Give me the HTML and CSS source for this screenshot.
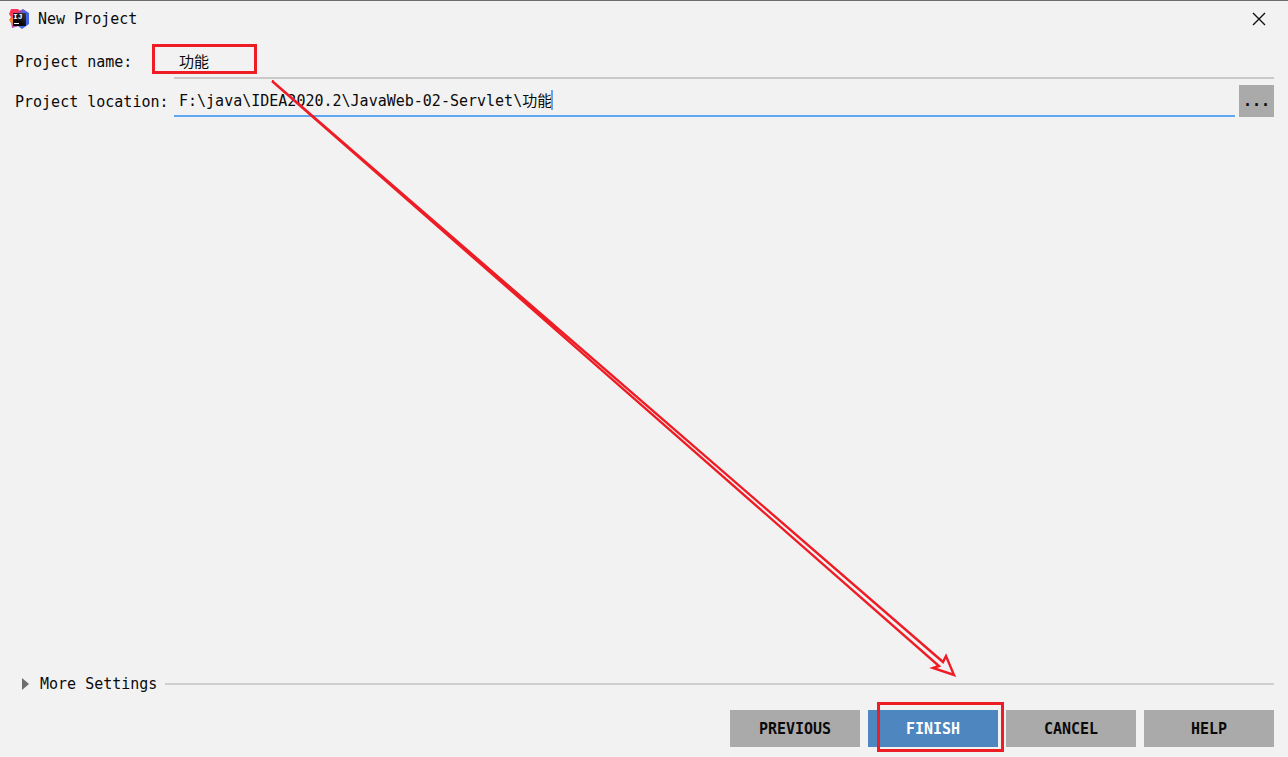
FILE: index.html
```html
<!DOCTYPE html>
<html lang="en">
<head>
  <meta charset="UTF-8">
  <title>New Project</title>
  <link rel="stylesheet" href="styles.css">
</head>
<body>
  <div class="dialog">
    <header class="title-bar">
      <svg class="logo" width="20" height="20" viewBox="0 0 20 20">
        <defs>
          <linearGradient id="warm" x1="0" y1="0" x2="0" y2="1">
            <stop offset="0" stop-color="#fe315d"/>
            <stop offset="0.35" stop-color="#fb3a50"/>
            <stop offset="0.6" stop-color="#f98b2b"/>
            <stop offset="1" stop-color="#b642d6"/>
          </linearGradient>
          <linearGradient id="cool" x1="0" y1="0" x2="1" y2="1">
            <stop offset="0" stop-color="#ee2a75"/>
            <stop offset="0.4" stop-color="#4768e8"/>
            <stop offset="1" stop-color="#3a62e0"/>
          </linearGradient>
          <linearGradient id="face" x1="0" y1="1" x2="1" y2="0">
            <stop offset="0.4" stop-color="#0b0608"/>
            <stop offset="1" stop-color="#3a3a3c"/>
          </linearGradient>
        </defs>
        <path d="M2 0 L9 0 L12 3 L10 17 L3 19 L2 14 L0 11 L2 8 L0 5 Z" fill="url(#warm)"/>
        <path d="M8 3 L14 0 L20 4 L20 15 L13 20 L9 17 Z" fill="url(#cool)"/>
        <rect x="4" y="4" width="13" height="13" fill="url(#face)"/>
        <text class="logo-text" x="4" y="10">IJ</text>
        <rect x="5" y="14" width="5" height="1" fill="#fff"/>
      </svg>
      <h1>New Project</h1>
      <button class="close" aria-label="Close">
        <svg width="14" height="14" viewBox="0 0 14 14">
          <path d="M1 1 L13 13 M13 1 L1 13" stroke="#111" stroke-width="1.4"/>
        </svg>
      </button>
    </header>

    <main class="form">
      <div class="row">
        <label for="project-name">Project name:</label>
        <div class="field">
          <input type="text" id="project-name" value="功能">
          <span class="mark name-mark"></span>
        </div>
      </div>
      <div class="row">
        <label for="project-location">Project location:</label>
        <div class="field active">
          <input type="text" id="project-location" value="F:\java\IDEA2020.2\JavaWeb-02-Servlet\功能">
          <span class="caret"></span>
        </div>
        <button class="browse" aria-label="Browse">...</button>
      </div>
    </main>

    <button class="more">
      <svg width="8" height="12" viewBox="0 0 8 12">
        <path d="M1 0 L8 6 L1 12 Z" fill="#6e6e6e"/>
      </svg>
      <span>More Settings</span>
      <span class="line"></span>
    </button>

    <footer class="actions">
      <button>PREVIOUS</button>
      <button class="primary">FINISH<span class="mark finish-mark"></span></button>
      <button>CANCEL</button>
      <button>HELP</button>
    </footer>

    <svg class="arrow" width="960" height="680" viewBox="0 0 960 680">
      <path d="M272 81 L943 662 L946 656 L954 675 L933 668 L939 666 Z"/>
    </svg>
  </div>
</body>
</html>
```
FILE: styles.css
```css
* {
  box-sizing: border-box;
}

body {
  margin: 0;
  background-color: #f2f2f2;
  color: #0a0a0a;
  font-family: "DejaVu Sans Mono", "Noto Sans CJK SC", monospace;
  font-size: 15px;
  line-height: 20px;
}

button,
input {
  font: inherit;
  color: inherit;
  border: none;
  background: none;
  padding: 0;
}

.dialog {
  position: relative;
  display: flex;
  flex-direction: column;
  min-height: 100vh;
  border-top: 1px solid #6b6b6b;
  overflow: hidden;
}

/* title bar */
.title-bar {
  display: flex;
  align-items: center;
  height: 36px;
  padding: 0 22px 0 9px;
}

.title-bar h1 {
  flex: 1;
  margin: 0 0 0 9px;
  font-size: 15px;
  font-weight: normal;
}

.logo-text {
  font-family: "Liberation Mono", monospace;
  font-size: 8px;
  font-weight: bold;
  fill: #fff;
}

.close {
  display: flex;
}

/* form */
.form {
  flex: 1;
  padding: 8px 14px 0 15px;
}

.row {
  display: flex;
  margin-bottom: 6px;
}

.row label {
  width: 159px;
  padding-top: 7px;
}

.field {
  position: relative;
  display: flex;
  align-items: center;
  flex: 1;
  height: 34px;
  border-bottom: 2px solid #c9c9c9;
}

.field input {
  width: 100%;
  height: 32px;
  padding: 0 0 2px 5px;
  outline: none;
}

.field.active {
  height: 32px;
  border-color: #5fa8f0;
}

.field.active input {
  width: 379px;
  height: 30px;
}

.caret {
  width: 2px;
  height: 20px;
  margin-left: -2px;
  background-color: #5fa8f0;
}

.browse {
  width: 35px;
  height: 32px;
  margin-left: 4px;
  background-color: #aaaaaa;
  font-weight: bold;
}

/* bottom */
.more {
  display: flex;
  align-items: center;
  padding: 0 14px 0 21px;
  text-align: left;
}

.more svg {
  margin-right: 11px;
}

.line {
  flex: 1;
  height: 2px;
  margin-left: 8px;
  background-color: #cfcfcf;
}

.actions {
  display: flex;
  justify-content: flex-end;
  gap: 8px;
  padding: 16px 14px 10px;
}

.actions button {
  position: relative;
  width: 130px;
  height: 37px;
  background-color: #aaaaaa;
  font-weight: bold;
}

.actions .primary {
  background-color: #4e87c0;
  color: #fff;
}

/* red annotations */
.mark {
  position: absolute;
  border: 3px solid #ee1c24;
  pointer-events: none;
}

.name-mark {
  top: -1px;
  left: -22px;
  width: 105px;
  height: 30px;
}

.finish-mark {
  top: -8px;
  left: 9px;
  width: 127px;
  height: 50px;
  z-index: 1;
}

.arrow {
  position: absolute;
  top: -1px;
  left: 0;
  fill: none;
  stroke: #ee1c24;
  stroke-width: 2.4;
  pointer-events: none;
}
```
